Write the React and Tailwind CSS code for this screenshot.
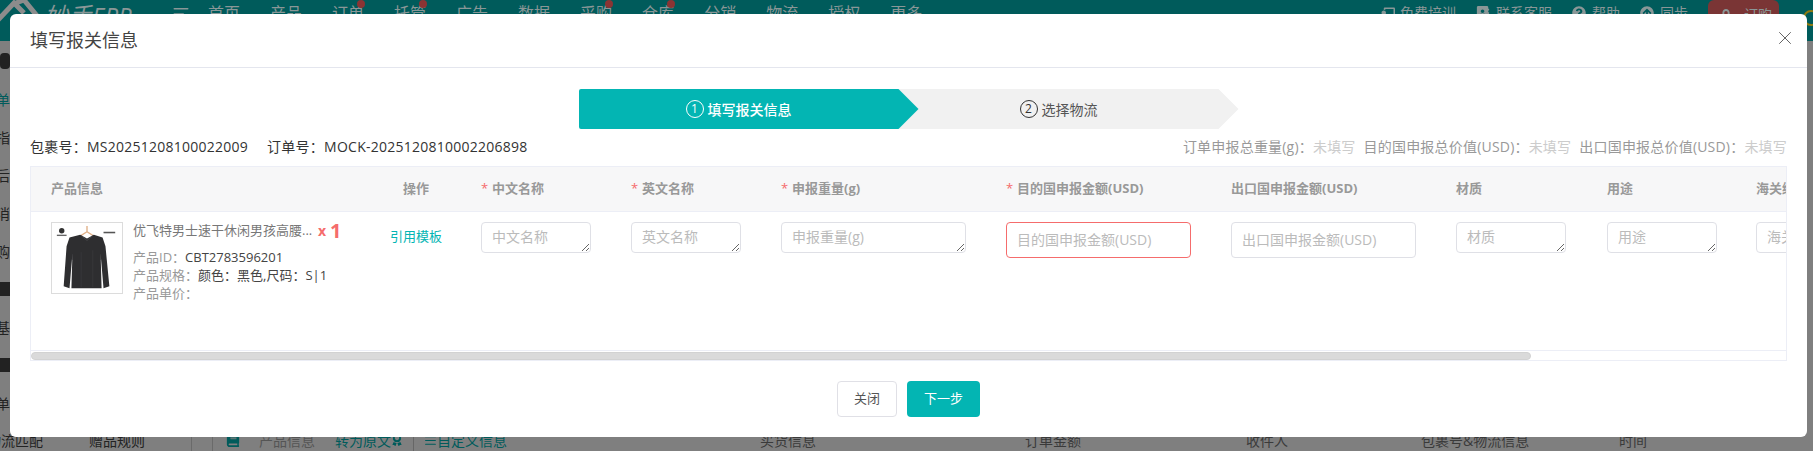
import React from 'react';
import { X, AlignLeft, AlignJustify } from 'lucide-react';
import { FaChalkboardTeacher, FaAddressBook, FaQuestionCircle, FaArrowCircleUp, FaLock, FaBook, FaAward } from 'react-icons/fa';

const navItems = [
  { label: '首页' },
  { label: '产品' },
  { label: '订单', dot: true },
  { label: '托管', dot: true },
  { label: '广告' },
  { label: '数据' },
  { label: '采购', dot: true },
  { label: '仓库', dot: true },
  { label: '分销' },
  { label: '物流' },
  { label: '授权' },
  { label: '更多' },
];

const sideRows = [
  { text: '', icon: true },
  { text: '单', teal: true },
  { text: '指' },
  { text: '后' },
  { text: '消' },
  { text: '购' },
  { text: '', bar: true },
  { text: '基' },
  { text: '', bar: true },
  { text: '单' },
];

const fields = [
  { key: 'cn', label: '中文名称', required: true, width: 'w-[150px]', box: 'w-[110px]' },
  { key: 'en', label: '英文名称', required: true, width: 'w-[150px]', box: 'w-[110px]' },
  { key: 'weight', label: '申报重量(g)', required: true, width: 'w-[225px]', box: 'w-[185px]' },
  { key: 'dest', label: '目的国申报金额(USD)', required: true, width: 'w-[225px]', input: true, error: true },
  { key: 'export', label: '出口国申报金额(USD)', width: 'w-[225px]', input: true },
  { key: 'material', label: '材质', width: 'w-[151px]', box: 'w-[110px]' },
  { key: 'usage', label: '用途', width: 'w-[149px]', box: 'w-[110px]' },
  { key: 'hs', label: '海关编码', width: 'w-[150px]', box: 'w-[110px]' },
];

const ShirtPicture = () => (
  <svg viewBox="0 0 72 72" className="w-[70px] h-[70px]">
    <path d="M36 3v6M36 9l-8 5M36 9l8 5" stroke="#e0b088" strokeWidth="1.4" fill="none" />
    <path d="M29 12l7 4 7-4 9 3 3 9 4 41-6 2-3-35 1 35H20l1-35-3 35-6-2 3-41 3-9z" fill="#2e2e30" />
    <path d="M30 13l6 5 6-5" stroke="#4a4a4c" strokeWidth="0.8" fill="none" />
    <path d="M21 32v6M50 32v6M30 30v36M42 28v38" stroke="#3a3a3c" strokeWidth="0.8" />
    <circle cx="10" cy="8" r="2.8" fill="#333" />
    <rect x="5" y="12" width="10" height="1.4" fill="#666" />
    <rect x="53" y="9" width="12" height="1.6" fill="#555" />
  </svg>
);

const App = () => {
  return (
    <div className="relative w-[1813px] h-[451px] overflow-hidden bg-[#7f7f7f] font-['Open_Sans','Noto_Sans_CJK_SC',sans-serif]">
      {/* Page behind the dialog */}
      <div className="flex flex-col h-full">
        <header className="flex items-start h-[41px] bg-[#005b5b] text-[#8a9797] shrink-0">
          <svg viewBox="0 0 42 41" className="w-[42px] h-[41px] shrink-0">
            <path d="M-4 22L14 3l10 10M16 3l8-3 18 22" stroke="#8c8c8c" strokeWidth="5" fill="none" />
          </svg>
          <span className="ml-[2px] w-[93px] text-[24px] leading-[32px] italic whitespace-nowrap">妙手ERP</span>
          <AlignLeft size={18} className="ml-[35px] mt-[5px] shrink-0" />
          <nav className="flex gap-[30px] ml-[18px] text-[16px] leading-[26px]">
            {navItems.map((item) => (
              <span key={item.label} className="relative whitespace-nowrap">
                {item.label}
                {item.dot && <span className="absolute -right-[1px] top-0 w-2 h-2 rounded-full bg-[#8a3434]" />}
              </span>
            ))}
          </nav>
          <div className="flex items-start ml-auto text-[14px] leading-[26px]">
            <FaChalkboardTeacher size={15} className="mt-[6px]" />
            <span className="ml-[5px]">免费培训</span>
            <FaAddressBook size={14} className="ml-[20px] mt-[6px]" />
            <span className="ml-[6px]">联系客服</span>
            <FaQuestionCircle size={14} className="ml-[20px] mt-[6px]" />
            <span className="ml-[6px]">帮助</span>
            <FaArrowCircleUp size={14} className="ml-[20px] mt-[6px]" />
            <span className="ml-[6px]">同步</span>
            <div className="flex items-center gap-[12px] ml-[20px] w-[71px] h-[30px] pl-[12px] rounded-md bg-[#7a3535]">
              <FaLock size={12} />
              <span className="leading-[26px]">订购</span>
            </div>
            <span className="ml-[24px] mr-[-6px] mt-[10px] w-[16px] h-[16px] rounded-full border-2 border-[#8f7a10]" />
          </div>
        </header>

        <div className="flex flex-1 min-h-0 text-[14px] text-[#222]">
          <aside className="flex flex-col w-[192px] shrink-0 pt-px border-r border-[#6a6a6a]">
            {sideRows.map((row, index) => (
              <div key={index} className="flex items-center h-[38px] -ml-[4px]">
                {row.icon && <span className="ml-[4px] w-[10px] h-[16px] rounded-sm bg-[#222]" />}
                {row.bar && <span className="ml-[4px] w-[10px] h-[14px] bg-[#222]" />}
                <span className={row.teal ? 'text-[#005b5b]' : ''}>{row.text}</span>
              </div>
            ))}
            <div className="flex items-center h-[16px] mt-[10px] -ml-[13px] whitespace-nowrap">
              <span className="w-[102px]">物流匹配</span>
              <span>赠品规则</span>
            </div>
          </aside>
          <main className="flex flex-col justify-end flex-1 pl-[13px] border-l border-[#6a6a6a] ml-[20px]">
            <div className="flex items-center h-[16px] mb-[3px] whitespace-nowrap text-[#3a3a3a]">
              <FaBook size={14} className="text-[#005b5b]" />
              <span className="ml-[19px] w-[76px] text-[#555]">产品信息</span>
              <span className="text-[#005b5b]">转为原文</span>
              <FaAward size={12} className="text-[#005b5b]" />
              <span className="flex items-center ml-[10px] pl-[10px] border-l border-[#666] text-[#005b5b]">
                <AlignJustify size={13} />
                自定义信息
              </span>
              <span className="ml-[253px] w-[265px]">买货信息</span>
              <span className="w-[221px]">订单金额</span>
              <span className="w-[175px]">收件人</span>
              <span className="w-[198px]">包裹号&amp;物流信息</span>
              <span>时间</span>
            </div>
          </main>
        </div>
      </div>

      {/* Dialog */}
      <div className="absolute left-[10px] top-[14px] w-[1797px] h-[423px] rounded-md bg-white flex flex-col">
        <div className="flex items-center justify-between h-[54px] shrink-0 px-[20px] border-b border-[#e4e6ee]">
          <h2 className="text-[18px] text-[#444] font-normal">填写报关信息</h2>
          <X size={22} strokeWidth={1} className="mr-[-9px] mt-[-6px] text-[#555]" />
        </div>

        {/* Steps */}
        <div className="flex justify-center pt-[21px] shrink-0">
          <div className="relative z-10 flex items-center justify-center gap-[4px] w-[340px] h-10 pr-[20px] rounded-l-[2px] bg-[#03b5b3] text-white text-[14px] font-medium [clip-path:polygon(0_0,calc(100%-20px)_0,100%_50%,calc(100%-20px)_100%,0_100%)]">
            <span className="flex items-center justify-center w-[18px] h-[18px] rounded-full border border-white text-[12px] font-normal">1</span>
            填写报关信息
          </div>
          <div className="flex items-center justify-center gap-[4px] w-[340px] h-10 -ml-[20px] pr-[20px] bg-[#f1f1f1] text-[#555] text-[14px] [clip-path:polygon(0_0,calc(100%-20px)_0,100%_50%,calc(100%-20px)_100%,0_100%)]">
            <span className="flex items-center justify-center w-[18px] h-[18px] rounded-full border border-[#333] text-[12px] text-[#333]">2</span>
            选择物流
          </div>
        </div>

        {/* Order info */}
        <div className="flex items-center justify-between h-[37px] shrink-0 px-[20px] pb-[3px] text-[14px] whitespace-nowrap">
          <div className="flex text-[#333] tracking-[0.25px]">
            <span>包裹号：MS20251208100022009</span>
            <span className="ml-[19px]">订单号：MOCK-2025120810002206898</span>
          </div>
          <div className="flex text-[#999] tracking-[0.2px]">
            <span>订单申报总重量(g)：<span className="text-[#ccc]">未填写</span></span>
            <span className="ml-[8px]">目的国申报总价值(USD)：<span className="text-[#ccc]">未填写</span></span>
            <span className="ml-[8px]">出口国申报总价值(USD)：<span className="text-[#ccc]">未填写</span></span>
          </div>
        </div>

        {/* Declaration table */}
        <div className="mx-[20px] h-[195px] shrink-0 border border-[#eceef6] overflow-hidden">
          <table className="table-fixed w-[1781px] border-collapse text-[13px]">
            <thead>
              <tr className="h-[44px] bg-[#f7f7f8] border-b border-[#eceef6] text-[#999] font-bold">
                <th className="w-[340px] pl-[20px] text-left">产品信息</th>
                <th className="w-[90px] text-center">操作</th>
                {fields.map((field) => (
                  <th key={field.key} className={`${field.width} pl-[20px] text-left whitespace-nowrap overflow-hidden`}>
                    {field.required && <span className="inline-block w-[11px] font-normal text-[#f56c6c]">*</span>}
                    {field.label}
                  </th>
                ))}
              </tr>
            </thead>
            <tbody>
              <tr className="h-[139px] align-top border-b border-[#eceef6]">
                <td className="pl-[20px] pt-[10px]">
                  <div className="flex">
                    <div className="flex items-center justify-center w-[72px] h-[72px] shrink-0 border border-[#dcdcdc]">
                      <ShirtPicture />
                    </div>
                    <div className="ml-[10px] min-w-0">
                      <div className="flex items-center h-[20px] -mt-[1px] mb-[7px] whitespace-nowrap">
                        <span className="w-[185px] text-[#777]">优飞特男士速干休闲男孩高腰...</span>
                        <span className="text-[14px] font-bold text-[#f56c6c]">x</span>
                        <span className="ml-[4px] text-[20px] leading-[20px] font-bold text-[#f56c6c]">1</span>
                      </div>
                      <div className="leading-[18px] text-[#999] whitespace-nowrap">
                        <div>产品ID：<span className="text-[#444]">CBT2783596201</span></div>
                        <div>产品规格：<span className="text-[#444]">颜色：黑色,尺码：S|1</span></div>
                        <div>产品单价：</div>
                      </div>
                    </div>
                  </div>
                </td>
                <td className="pt-[15px] text-center text-[#03b5b3]">引用模板</td>
                {fields.map((field) => (
                  <td key={field.key} className="pl-[20px] pt-[10px] overflow-hidden">
                    {field.input ? (
                      <input
                        placeholder={field.label}
                        className={`block w-[185px] h-[36px] px-[10px] rounded border text-[14px] outline-none placeholder:text-[#bbb] ${field.error ? 'border-[#f56c6c]' : 'border-[#dfe0e6]'}`}
                      />
                    ) : (
                      <textarea
                        placeholder={field.label}
                        className={`block ${field.box} h-[31px] px-[10px] py-[4px] rounded border border-[#dfe0e6] text-[14px] leading-[20px] outline-none placeholder:text-[#bbb]`}
                      />
                    )}
                  </td>
                ))}
              </tr>
            </tbody>
          </table>
          {/* Horizontal scrollbar */}
          <div className="h-[11px] py-px">
            <div className="w-[1500px] h-[8px] rounded-full bg-[#dadada] border border-[#d2d2d2]" />
          </div>
        </div>

        {/* Footer */}
        <div className="flex justify-center gap-[10px] pt-[20px]">
          <button className="w-[60px] h-[36px] rounded border border-[#e0e0e6] bg-white text-[13px] text-[#555]">关闭</button>
          <button className="w-[73px] h-[36px] rounded bg-[#03b5b3] text-[13px] text-white">下一步</button>
        </div>
      </div>
    </div>
  );
};

export default App;
